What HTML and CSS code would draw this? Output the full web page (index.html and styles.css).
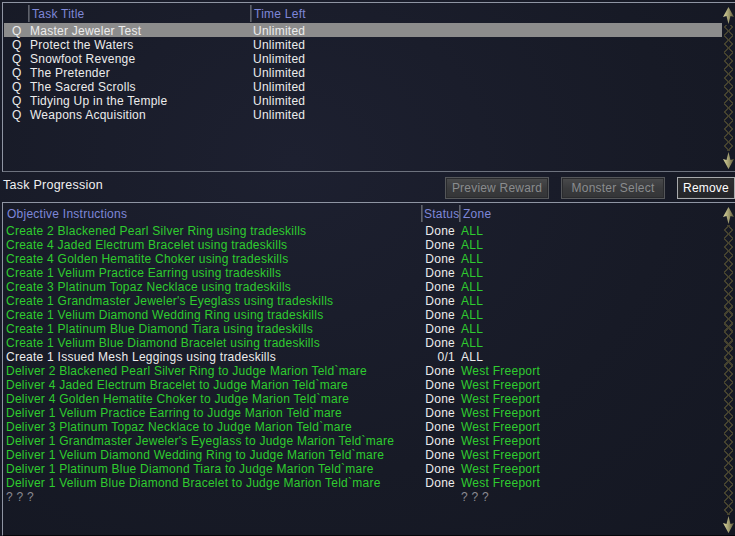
FILE: index.html
```html
<!DOCTYPE html>
<html>
<head>
<meta charset="utf-8">
<link rel="stylesheet" href="styles.css">
</head>
<body>
<div class="window">
  <div class="panel panel-top">
    <div class="list">
      <div class="hdr">
        <span class="c-q"></span>
        <span class="c-title"><i class="div"></i>Task Title</span>
        <span class="c-time"><i class="div"></i>Time Left</span>
      </div>
      <div class="row sel"><span class="c-q">Q</span><span class="c-title">Master Jeweler Test</span><span class="c-time">Unlimited</span></div>
      <div class="row"><span class="c-q">Q</span><span class="c-title">Protect the Waters</span><span class="c-time">Unlimited</span></div>
      <div class="row"><span class="c-q">Q</span><span class="c-title">Snowfoot Revenge</span><span class="c-time">Unlimited</span></div>
      <div class="row"><span class="c-q">Q</span><span class="c-title">The Pretender</span><span class="c-time">Unlimited</span></div>
      <div class="row"><span class="c-q">Q</span><span class="c-title">The Sacred Scrolls</span><span class="c-time">Unlimited</span></div>
      <div class="row"><span class="c-q">Q</span><span class="c-title">Tidying Up in the Temple</span><span class="c-time">Unlimited</span></div>
      <div class="row"><span class="c-q">Q</span><span class="c-title">Weapons Acquisition</span><span class="c-time">Unlimited</span></div>
    </div>
    <div class="scrollbar">
      <svg class="arrow" width="13" height="18" viewBox="0 0 13 18"><defs><linearGradient id="g1" x1="0" y1="0" x2="1" y2="0"><stop offset="0" stop-color="#dcd8a0"/><stop offset="0.5" stop-color="#a29e70"/><stop offset="1" stop-color="#5a5638"/></linearGradient></defs><path d="M6.5 0 L12 10 L8.5 9 L6.5 17 L4.5 9 L1 10 Z" fill="url(#g1)"/></svg>
      <div class="track"></div>
      <svg class="arrow" width="13" height="18" viewBox="0 0 13 18"><path d="M6.5 18 L12 8 L8.5 9 L6.5 1 L4.5 9 L1 8 Z" fill="url(#g1)"/></svg>
    </div>
  </div>

  <div class="toolbar">
    <span class="label">Task Progression</span>
    <div class="buttons">
      <button class="btn disabled b-preview">Preview Reward</button>
      <button class="btn disabled b-monster">Monster Select</button>
      <button class="btn active b-remove">Remove</button>
    </div>
  </div>

  <div class="panel panel-bottom">
    <div class="list">
      <div class="hdr">
        <span class="c-obj">Objective Instructions</span>
        <span class="c-status"><i class="div"></i>Status</span>
        <span class="c-zone"><i class="div"></i>Zone</span>
      </div>
      <div class="row g"><span class="c-obj">Create 2 Blackened Pearl Silver Ring using tradeskills</span><span class="c-status">Done</span><span class="c-zone">ALL</span></div>
      <div class="row g"><span class="c-obj">Create 4 Jaded Electrum Bracelet using tradeskills</span><span class="c-status">Done</span><span class="c-zone">ALL</span></div>
      <div class="row g"><span class="c-obj">Create 4 Golden Hematite Choker using tradeskills</span><span class="c-status">Done</span><span class="c-zone">ALL</span></div>
      <div class="row g"><span class="c-obj">Create 1 Velium Practice Earring using tradeskills</span><span class="c-status">Done</span><span class="c-zone">ALL</span></div>
      <div class="row g"><span class="c-obj">Create 3 Platinum Topaz Necklace using tradeskills</span><span class="c-status">Done</span><span class="c-zone">ALL</span></div>
      <div class="row g"><span class="c-obj">Create 1 Grandmaster Jeweler's Eyeglass using tradeskills</span><span class="c-status">Done</span><span class="c-zone">ALL</span></div>
      <div class="row g"><span class="c-obj">Create 1 Velium Diamond Wedding Ring using tradeskills</span><span class="c-status">Done</span><span class="c-zone">ALL</span></div>
      <div class="row g"><span class="c-obj">Create 1 Platinum Blue Diamond Tiara using tradeskills</span><span class="c-status">Done</span><span class="c-zone">ALL</span></div>
      <div class="row g"><span class="c-obj">Create 1 Velium Blue Diamond Bracelet using tradeskills</span><span class="c-status">Done</span><span class="c-zone">ALL</span></div>
      <div class="row w"><span class="c-obj">Create 1 Issued Mesh Leggings using tradeskills</span><span class="c-status">0/1</span><span class="c-zone">ALL</span></div>
      <div class="row g"><span class="c-obj">Deliver 2 Blackened Pearl Silver Ring to Judge Marion Teld`mare</span><span class="c-status">Done</span><span class="c-zone">West Freeport</span></div>
      <div class="row g"><span class="c-obj">Deliver 4 Jaded Electrum Bracelet to Judge Marion Teld`mare</span><span class="c-status">Done</span><span class="c-zone">West Freeport</span></div>
      <div class="row g"><span class="c-obj">Deliver 4 Golden Hematite Choker to Judge Marion Teld`mare</span><span class="c-status">Done</span><span class="c-zone">West Freeport</span></div>
      <div class="row g"><span class="c-obj">Deliver 1 Velium Practice Earring to Judge Marion Teld`mare</span><span class="c-status">Done</span><span class="c-zone">West Freeport</span></div>
      <div class="row g"><span class="c-obj">Deliver 3 Platinum Topaz Necklace to Judge Marion Teld`mare</span><span class="c-status">Done</span><span class="c-zone">West Freeport</span></div>
      <div class="row g"><span class="c-obj">Deliver 1 Grandmaster Jeweler's Eyeglass to Judge Marion Teld`mare</span><span class="c-status">Done</span><span class="c-zone">West Freeport</span></div>
      <div class="row g"><span class="c-obj">Deliver 1 Velium Diamond Wedding Ring to Judge Marion Teld`mare</span><span class="c-status">Done</span><span class="c-zone">West Freeport</span></div>
      <div class="row g"><span class="c-obj">Deliver 1 Platinum Blue Diamond Tiara to Judge Marion Teld`mare</span><span class="c-status">Done</span><span class="c-zone">West Freeport</span></div>
      <div class="row g"><span class="c-obj">Deliver 1 Velium Blue Diamond Bracelet to Judge Marion Teld`mare</span><span class="c-status">Done</span><span class="c-zone">West Freeport</span></div>
      <div class="row q"><span class="c-obj">? ? ?</span><span class="c-status"></span><span class="c-zone">? ? ?</span></div>
    </div>
    <div class="scrollbar">
      <svg class="arrow" width="13" height="18" viewBox="0 0 13 18"><path d="M6.5 0 L12 10 L8.5 9 L6.5 17 L4.5 9 L1 10 Z" fill="url(#g1)"/></svg>
      <div class="track"></div>
      <svg class="arrow" width="13" height="18" viewBox="0 0 13 18"><path d="M6.5 18 L12 8 L8.5 9 L6.5 1 L4.5 9 L1 8 Z" fill="url(#g1)"/></svg>
    </div>
  </div>
</div>
</body>
</html>
```

FILE: styles.css
```css
html, body {
  margin: 0;
  padding: 0;
  background: #181b27;
}
.window {
  width: 735px;
  height: 536px;
  overflow: hidden;
  background: radial-gradient(ellipse at 40% 30%, #1d2030 0%, #171a26 60%, #141722 100%);
  font-family: "Liberation Sans", Arial, sans-serif;
  font-size: 12px;
  letter-spacing: 0.25px;
  color: #ececec;
  display: flex;
  flex-direction: column;
  padding-top: 2px;
  box-sizing: border-box;
}
.panel {
  margin-left: 2px;
  border-top: 1px solid #8f95a3;
  border-left: 1px solid #8f95a3;
  border-bottom: 1px solid #6d727e;
  display: flex;
  box-sizing: border-box;
}
.panel-top { height: 170px; }
.panel-bottom { height: 334px; border-bottom-color: #05060a; }
.list {
  flex: 1;
  padding-left: 1px;
}
.hdr {
  height: 20px;
  display: flex;
  color: #7e87d8;
}
.hdr span { position: relative; height: 20px; line-height: 22px; }
.div {
  position: absolute;
  left: -2px;
  top: 2px;
  width: 2px;
  height: 17px;
  background: linear-gradient(to right, #6a6e78, #3a3d47);
}
.row {
  height: 14px;
  line-height: 16px;
  display: flex;
  white-space: nowrap;
}
.row.sel { background: #8c8c8c; }
.panel-top .c-q { width: 26px; padding-left: 8px; box-sizing: border-box; }
.panel-top .c-title { width: 222px; box-sizing: border-box; }
.panel-top .hdr .c-title { padding-left: 2px; }
.panel-top .c-time { padding-left: 1px; }
.panel-top .hdr .c-time { padding-left: 2px; }

.panel-bottom .c-obj { width: 419px; padding-left: 2px; box-sizing: border-box; }
.panel-bottom .hdr .c-obj { padding-left: 3px; }
.panel-bottom .c-status { width: 32px; text-align: right; color: #ececec; }
.panel-bottom .hdr .c-status { text-align: left; padding-left: 1px; box-sizing: border-box; width: 38px; color: #7e87d8; }
.panel-bottom .c-zone { padding-left: 6px; }
.panel-bottom .hdr .c-zone { padding-left: 2px; color: #7e87d8; }
.row.g .c-obj, .row.g .c-zone { color: #2fcc2f; }
.row.w .c-zone { color: #ececec; }
.row.q { color: #8a8a92; }

.scrollbar {
  width: 13px;
  display: flex;
  flex-direction: column;
  align-items: center;
  padding: 4px 0 2px;
  box-sizing: border-box;
}
.arrow { display: block; flex: none; }
.track {
  flex: 1;
  width: 9px;
  background:
    repeating-linear-gradient(45deg, transparent 0 3px, #45422f 3px 4.5px, transparent 4.5px 6px),
    repeating-linear-gradient(-45deg, transparent 0 3px, #45422f 3px 4.5px, transparent 4.5px 6px);
}

.toolbar {
  height: 30px;
  display: flex;
  align-items: center;
  justify-content: space-between;
  padding-left: 3px;
}
.label { font-size: 12.5px; color: #f0f0f0; margin-top: -5px; }
.buttons { display: flex; gap: 12px; margin-top: 1px; }
.btn {
  font-family: "Liberation Sans", Arial, sans-serif;
  font-size: 12px;
  letter-spacing: 0.2px;
  height: 22px;
  padding: 0;
  border: 1px solid #55575a;
  box-shadow: inset 0 0 0 1px #2a2b2e;
  background: linear-gradient(#4a4b4c, #3a3b3d 50%, #343537);
}
.btn.disabled { color: #8a8c8e; }
.b-preview { width: 104px; }
.b-monster { width: 104px; }
.b-remove {
  width: 58px;
  color: #ffffff;
  border-color: #a8aaac;
  background: linear-gradient(#2e2f32, #242528);
}
```
